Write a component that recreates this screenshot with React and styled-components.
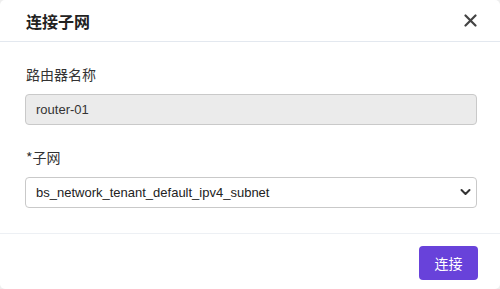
import React from "react";
import styled, { createGlobalStyle } from "styled-components";

const Global = createGlobalStyle`
  html, body { margin: 0; padding: 0; background: #eeeeee; }
  body { font-family: "Liberation Sans", "Noto Sans CJK SC", Arial, sans-serif; }
`;

const Dialog = styled.div`
  width: 500px;
  height: 289px;
  background: #fff;
  border-radius: 5px;
  box-sizing: border-box;
  display: flex;
  flex-direction: column;
  overflow: hidden;
`;

const Header = styled.div`
  height: 42px;
  box-sizing: border-box;
  border-bottom: 1px solid #e3e8ef;
  display: flex;
  align-items: center;
  justify-content: space-between;
  padding: 0 22px 0 26px;
`;

const Title = styled.div`
  font-family: "Noto Sans CJK SC", sans-serif;
  font-size: 16px;
  font-weight: 700;
  color: #222;
  line-height: 1;
`;

const Close = styled.button`
  border: 0;
  background: none;
  padding: 0;
  width: 16px;
  height: 16px;
  display: flex;
  align-items: center;
  justify-content: center;
  color: #444;
  cursor: pointer;
`;

const Body = styled.div`
  flex: 1;
  padding: 22px 23px 0 25px;
  display: flex;
  flex-direction: column;
`;

const Label = styled.label`
  font-family: "Noto Sans CJK SC", sans-serif;
  font-size: 14px;
  color: #333;
  line-height: 20px;
  margin: 0 0 10px 1px;
`;

const Field = styled.div`
  margin-bottom: ${(p) => p.$mb || 0}px;
  display: flex;
  flex-direction: column;
`;

const Input = styled.input`
  box-sizing: border-box;
  width: 100%;
  height: 31px;
  border: 1px solid #c9c9c9;
  border-radius: 4px;
  background: #ebebeb;
  padding: 0 10px;
  font-family: "Liberation Sans", Arial, sans-serif;
  font-size: 13px;
  color: #333;
  outline: none;
`;

const SelectWrap = styled.div`
  position: relative;
`;

const Select = styled.select`
  box-sizing: border-box;
  width: 100%;
  height: 31px;
  border: 1px solid #c9c9c9;
  border-radius: 4px;
  background: #fff;
  padding: 0 10px;
  font-family: "Liberation Sans", Arial, sans-serif;
  font-size: 13px;
  color: #222;
  appearance: none;
  outline: none;
`;

const Chevron = styled.svg`
  position: absolute;
  right: 6px;
  top: 11px;
  pointer-events: none;
`;

const Footer = styled.div`
  height: 56px;
  box-sizing: border-box;
  border-top: 1px solid #edf0f4;
  display: flex;
  align-items: center;
  justify-content: flex-end;
  padding: 0 22px 0 0;
`;

const Button = styled.button`
  width: 59px;
  height: 34px;
  border: 0;
  border-radius: 4px;
  background: #6842da;
  color: #fff;
  font-family: "Noto Sans CJK SC", sans-serif;
  font-size: 14px;
  cursor: pointer;
  margin-top: 3px;
`;

export default function App() {
  return (
    <>
      <Global />
      <Dialog>
        <Header>
          <Title>连接子网</Title>
          <Close aria-label="close">
            <svg width="13" height="13" viewBox="0 0 13 13">
              <path d="M1.5 1.5 L11.5 11.5 M11.5 1.5 L1.5 11.5" stroke="#444" strokeWidth="2.2" strokeLinecap="round" />
            </svg>
          </Close>
        </Header>
        <Body>
          <Field $mb={22}>
            <Label>路由器名称</Label>
            <Input value="router-01" readOnly />
          </Field>
          <Field>
            <Label>*子网</Label>
            <SelectWrap>
              <Select defaultValue="a">
                <option value="a">bs_network_tenant_default_ipv4_subnet</option>
              </Select>
              <Chevron width="11" height="8" viewBox="0 0 11 8">
                <path d="M1.5 2 L5.5 6 L9.5 2" fill="none" stroke="#333" strokeWidth="2" strokeLinecap="round" strokeLinejoin="round" />
              </Chevron>
            </SelectWrap>
          </Field>
        </Body>
        <Footer>
          <Button>连接</Button>
        </Footer>
      </Dialog>
    </>
  );
}
